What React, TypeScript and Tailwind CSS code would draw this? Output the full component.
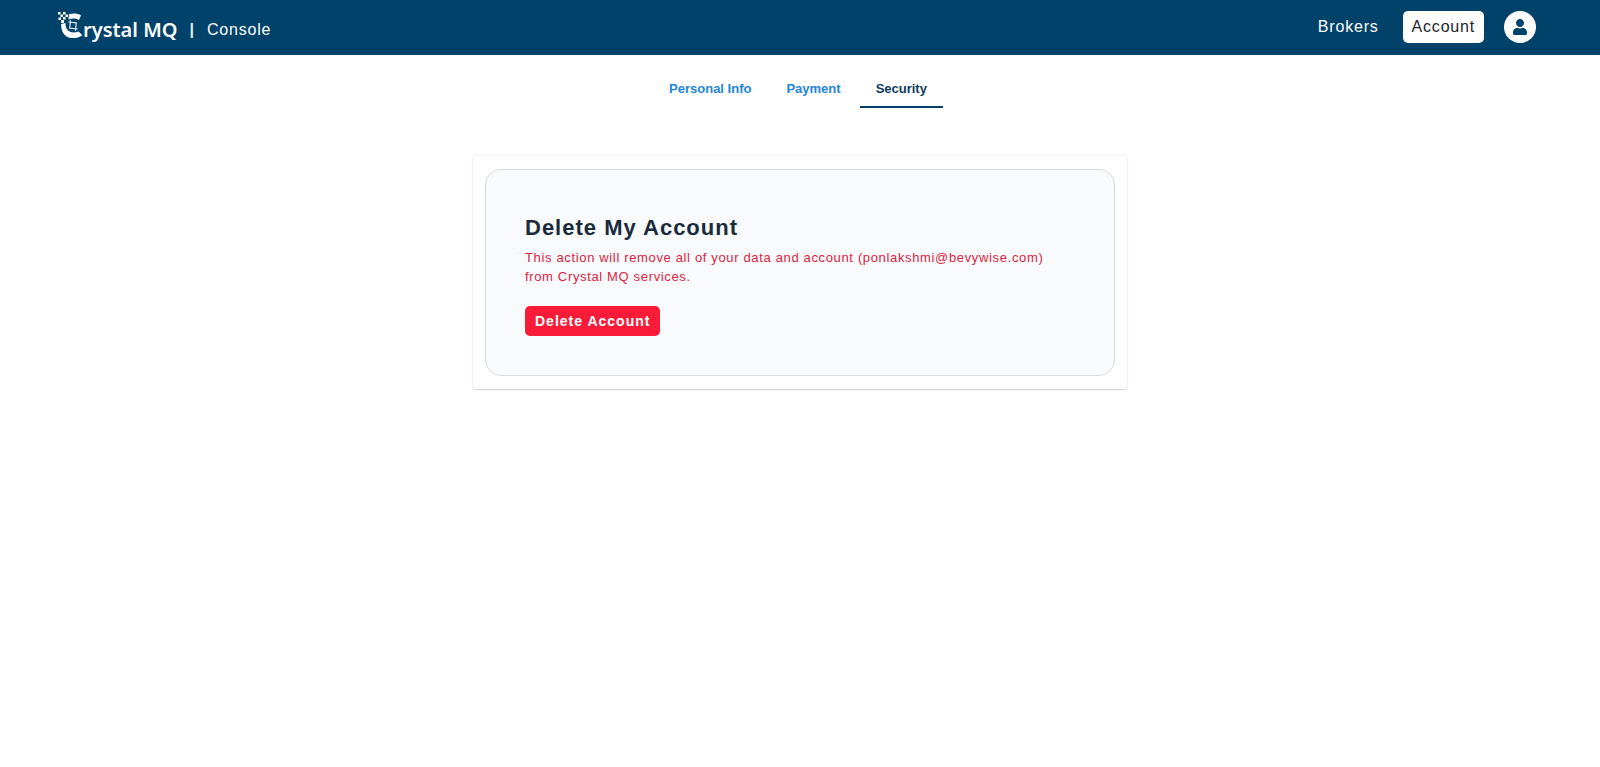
import React from 'react';
import { FaUser } from 'react-icons/fa';

const tabs = [
  { id: 'personal', label: 'Personal Info' },
  { id: 'payment', label: 'Payment' },
  { id: 'security', label: 'Security' },
];

const LogoMark = () => (
  <svg width="26" height="28" viewBox="0 0 26 28" fill="none" aria-hidden="true" className="mb-2">
    {/* scattered pixels */}
    <g fill="#fff">
      <rect x="1" y="0" width="2.5" height="2.5" />
      <rect x="6" y="0" width="2.5" height="2.5" />
      <rect x="3.5" y="2.5" width="2.5" height="2.5" />
      <rect x="8.5" y="2.5" width="2.5" height="2.5" />
      <rect x="1.5" y="5.5" width="2.5" height="2.5" />
      <rect x="6" y="5" width="2.5" height="2.5" />
      <rect x="4" y="8" width="3" height="3" />
    </g>
    {/* letter C body */}
    <path d="M12 2.2 C16.5 0.8 20.5 1.3 24 3.2 L22 8 C19.5 6.2 15.5 5.8 11.5 7.4 Z" fill="#fff" />
    <path d="M4.2 12 L8.6 11 C8.2 18.5 13.5 22.4 21.6 19.4 L25.4 23.2 C17 29 3.6 26.6 4.2 12 Z" fill="#fff" />
    {/* crop symbol */}
    <g transform="rotate(6 16 13.5)" stroke="#dcebf3" strokeWidth="1.2">
      <path d="M13 8.5 V16.5 H21" />
      <path d="M11 10.5 H19 V18.5" />
    </g>
  </svg>
);

const Header = () => (
  <header className="flex h-[55px] items-center justify-between bg-[#00426a] pl-[57px] pr-16 text-white">
    <a href="#" className="flex items-center pt-1">
      <LogoMark />
      <span className="font-['Noto_Sans',sans-serif] text-[20px] font-semibold leading-7">rystal MQ</span>
      <span className="ml-3 text-base font-bold text-[#dcf3f5]">|</span>
      <span className="ml-[13px] text-base tracking-wider">Console</span>
    </a>
    <nav className="flex items-center gap-5 pb-[2px]">
      <a href="#" className="px-1 text-base tracking-wider">Brokers</a>
      <button type="button" className="h-8 rounded-[5px] bg-white px-[9px] text-base tracking-wider text-[#212529]">
        Account
      </button>
      <button type="button" aria-label="Profile" className="flex size-8 items-center justify-center rounded-full bg-white text-[#00426a]">
        <FaUser className="size-4" />
      </button>
    </nav>
  </header>
);

const Tabs = ({ active }: { active: string }) => (
  <nav className="flex justify-center gap-[3px] pr-1 pt-4 text-[13px] font-bold">
    {tabs.map((tab) => (
      <a
        key={tab.id}
        href={`#${tab.id}`}
        className={`border-b-2 px-4 pb-[7px] pt-2 leading-5 ${
          tab.id === active ? 'border-[#00426a] text-[#0f3a5c]' : 'border-transparent text-[#2385d9]'
        }`}
      >
        {tab.label}
      </a>
    ))}
  </nav>
);

const DeleteAccount = ({ email }: { email: string }) => (
  <section className="mx-auto mt-12 max-w-[654px] rounded-xs bg-white px-3 py-[13px] shadow-[0_0_2px_rgba(0,0,0,0.15),0_1px_1px_rgba(0,0,0,0.15)]">
    <div className="rounded-2xl border border-[#d8dcde] bg-[#f8fafc] px-[39px] pb-[39px] pt-[42px]">
      <h1 className="text-[22px] font-bold leading-8 tracking-[1px] text-[#1a2b3c]">Delete My Account</h1>
      <p className="mt-1 text-[13px] leading-[19px] tracking-wider text-[#dc2440]">
        {`This action will remove all of your data and account (${email}) from Crystal MQ services.`}
      </p>
      <button type="button" className="mt-5 h-[30px] rounded-[5px] bg-[#f91b37] px-[10px] text-[14px] font-bold tracking-[1px] text-white">
        Delete Account
      </button>
    </div>
  </section>
);

export default function App() {
  return (
    <div className="min-h-screen bg-white font-['Liberation_Sans',Arial,sans-serif]">
      <Header />
      <main>
        <Tabs active="security" />
        <DeleteAccount email="ponlakshmi@bevywise.com" />
      </main>
    </div>
  );
}
